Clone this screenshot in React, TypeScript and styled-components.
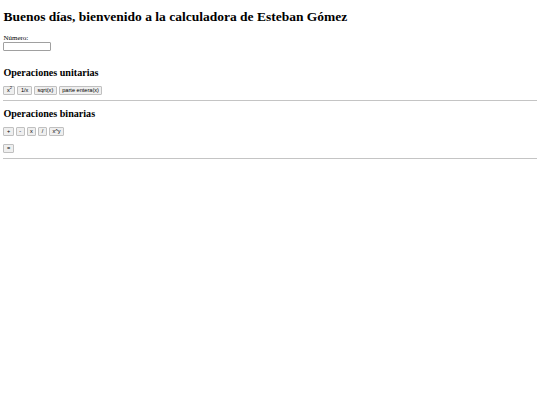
import styled, { createGlobalStyle } from "styled-components";

const GlobalStyle = createGlobalStyle`
  html, body {
    margin: 0;
    padding: 0;
    background: #ffffff;
  }
  body {
    font-family: "Liberation Serif", "Times New Roman", serif;
    color: #000000;
  }
`;

const Page = styled.main`
  padding: 0 3.4px;
  display: flow-root;
`;

const Title = styled.h1`
  font-size: 13.5px;
  font-weight: 700;
  margin: 9px 0;
`;

const Field = styled.div`
  display: flex;
  flex-direction: column;
  align-items: flex-start;
  margin-bottom: 15.6px;
`;

const Label = styled.label`
  font-size: 7px;
  line-height: 8px;
`;

const NumberInput = styled.input`
  box-sizing: border-box;
  width: 48px;
  height: 9px;
  margin: 0;
  padding: 0 1px;
  border: 1px solid #a0a0a0;
  border-radius: 1px;
  font-size: 5.6px;
  font-family: "Liberation Sans", Arial, sans-serif;
`;

const SectionTitle = styled.h2`
  font-size: 10.1px;
  font-weight: 700;
  margin: 7px 0 8.4px;
`;

const ButtonRow = styled.div<{ $gap?: number }>`
  display: flex;
  gap: 2px;
  align-items: center;
  margin-bottom: ${(p) => p.$gap ?? 0}px;
`;

const OpButton = styled.button`
  box-sizing: border-box;
  height: 9px;
  padding: 0 2.5px;
  margin: 0;
  border: 1px solid #c0c0c0;
  border-radius: 1px;
  background: #efefef;
  font-family: "Liberation Sans", Arial, sans-serif;
  font-size: 5.6px;
  line-height: 7px;
  color: #000;
  cursor: pointer;

  sup {
    font-size: 4px;
    line-height: 0;
  }
`;

const Rule = styled.hr`
  margin: 5px 0 0;
  border: 0;
  border-top: 1px solid #c4c4c4;
  height: 0;
`;

export default function App() {
  return (
    <>
      <GlobalStyle />
      <Page>
        <Title>Buenos días, bienvenido a la calculadora de Esteban Gómez</Title>
        <Field>
          <Label htmlFor="numero">Número:</Label>
          <NumberInput id="numero" type="text" />
        </Field>

        <section>
          <SectionTitle>Operaciones unitarias</SectionTitle>
          <ButtonRow>
            <OpButton>
              x<sup>2</sup>
            </OpButton>
            <OpButton>1/x</OpButton>
            <OpButton>sqrt(x)</OpButton>
            <OpButton>parte entera(x)</OpButton>
          </ButtonRow>
          <Rule />
        </section>

        <section>
          <SectionTitle>Operaciones binarias</SectionTitle>
          <ButtonRow $gap={8}>
            <OpButton>+</OpButton>
            <OpButton>-</OpButton>
            <OpButton>x</OpButton>
            <OpButton>/</OpButton>
            <OpButton>x^y</OpButton>
          </ButtonRow>
          <ButtonRow>
            <OpButton>=</OpButton>
          </ButtonRow>
          <Rule />
        </section>
      </Page>
    </>
  );
}
